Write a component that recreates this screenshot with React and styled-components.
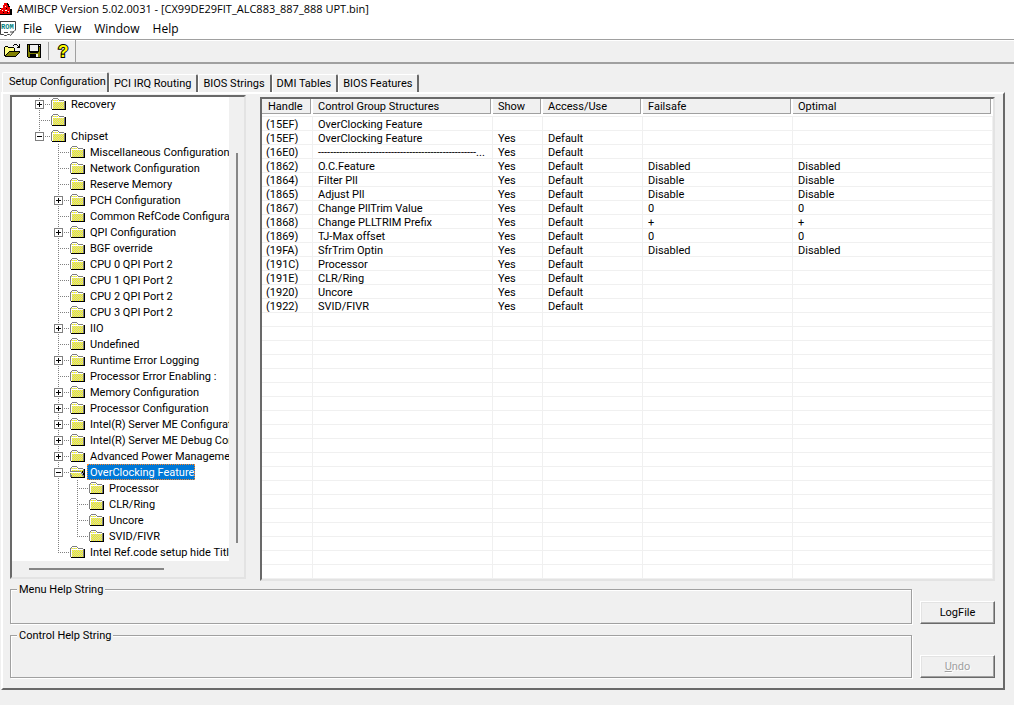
import React, { useState } from 'react';
import styled, { createGlobalStyle } from 'styled-components';

const colorFace = '#f0f0f0';
const colorShadow = '#a0a0a0';
const colorDark = '#696969';
const colorLight = '#e3e3e3';
const colorSelect = '#0078d7';
const fontUi = "'Open Sans', 'Noto Sans', sans-serif";
const fontDialog = "Roboto, 'Liberation Sans', sans-serif";

const GlobalStyle = createGlobalStyle`
  * {
    box-sizing: border-box;
  }
  body {
    margin: 0;
    background: ${colorFace};
  }
  button {
    font: inherit;
    color: inherit;
  }
`;

const Window = styled.div`
  display: flex;
  flex-direction: column;
  min-height: 100vh;
  font-family: ${fontDialog};
  font-size: 11px;
  line-height: 13px;
  color: #000;
`;

const TitleBar = styled.header`
  display: flex;
  align-items: center;
  gap: 4px;
  height: 17px;
  background: #fff;
  font-family: ${fontUi};
`;

const Title = styled.h1`
  margin: 0;
  font-size: 11px;
  font-weight: normal;
  line-height: 15px;
  white-space: nowrap;
`;

const MenuBar = styled.nav`
  display: flex;
  align-items: center;
  height: 22px;
  padding-top: 2px;
  background: #fff;
  font-family: ${fontUi};
  font-size: 12px;
`;

const MenuItem = styled.button`
  border: none;
  padding: 0 6px 0 7px;
  background: none;
  line-height: 18px;
`;

const Toolbar = styled.div`
  display: flex;
  height: 25px;
  border-top: 1px solid ${colorShadow};
  border-bottom: 2px solid ${colorShadow};
  box-shadow: inset 0 1px 0 #fff;
`;

const ToolGroup = styled.div`
  display: flex;
  align-items: center;
  padding: 0 4px;
  border-right: 1px solid ${colorShadow};
`;

const ToolButton = styled.button`
  display: flex;
  flex: none;
  border: none;
  padding: 0;
  width: ${({ $w }) => $w || '22px'};
  background: none;
`;

const ToolDivider = styled.span`
  width: 1px;
  height: 18px;
  margin-right: 8px;
  background: ${colorShadow};
`;

const Workspace = styled.main`
  flex: 1;
  display: flex;
  flex-direction: column;
  padding: 8px 9px 15px 1px;
`;

const TabList = styled.div`
  display: flex;
  align-items: flex-end;
  height: 20px;
  padding-left: 1px;
`;

const Tab = styled.button`
  height: ${({ $active }) => ($active ? '20px' : '18px')};
  padding: ${({ $active }) => ($active ? '0 1px 2px 6px' : '0 5px 0 4px')};
  border: 1px solid #fff;
  border-right: 2px solid ${colorDark};
  border-bottom: none;
  border-radius: 2px 2px 0 0;
  background: ${colorFace};
  white-space: nowrap;
`;

const Panel = styled.section`
  flex: 1;
  display: flex;
  flex-direction: column;
  border: 2px solid;
  border-color: #fff ${colorDark} ${colorDark} #fff;
  padding: 1px 8px 10px 7px;
`;

const Split = styled.div`
  flex: 1;
  display: grid;
  grid-template-columns: 236px 1fr;
  gap: 14px;
`;

const Sunken = styled.div`
  border: 2px solid;
  border-color: ${colorDark} ${colorLight} ${colorLight} ${colorDark};
  box-shadow: inset -1px -1px 0 #fff;
  margin: ${({ $m }) => $m || 0};
  overflow: hidden;
`;

const TreeBox = styled(Sunken)`
  display: grid;
  grid-template-columns: 1fr 15px;
  grid-template-rows: 1fr 16px;
`;

/* scrolled to the end, so the first rows are cut at the top */
const Tree = styled.ul`
  display: flex;
  flex-direction: column;
  justify-content: flex-end;
  min-width: 0;
  height: 464px;
  margin: 0;
  padding: 0 0 1px 18px;
  overflow: hidden;
  list-style: none;
  background: #fff;
`;

const TreeRow = styled.li`
  display: flex;
  flex: none;
  height: 16px;
  white-space: nowrap;
  svg {
    flex: none;
  }
`;

const TreeLabel = styled.span`
  margin-left: 1px;
  padding: 2px 1px 0 3px;
  line-height: 14px;
  color: ${({ $selected }) => ($selected ? '#fff' : '#000')};
  background: ${({ $selected }) => ($selected ? colorSelect : 'none')};
  outline: ${({ $selected }) => ($selected ? '1px dotted #ff8728' : 'none')};
  outline-offset: -1px;
`;

const VerticalBar = styled.div`
  padding: 56px 6px 18px 7px;
  background: ${colorFace};
`;

const HorizontalBar = styled.div`
  grid-column: 1 / 3;
  padding: 7px 80px 7px 17px;
  background: ${colorFace};
`;

const Thumb = styled.div`
  width: 100%;
  height: 100%;
  background: #868686;
`;

const ListBox = styled(Sunken)`
  background: #fff;
`;

const Table = styled.table`
  width: 100%;
  border-collapse: separate;
  border-spacing: 0;
  table-layout: fixed;
`;

const HeadCell = styled.th`
  height: 18px;
  padding: 0 2px 2px 0;
  border-bottom: 1px solid ${colorFace};
  font-weight: normal;
  text-align: left;
`;

const HeadLabel = styled.div`
  height: 15px;
  padding-left: ${({ $first }) => ($first ? '6px' : '5px')};
  border-right: 1px solid ${colorShadow};
  border-bottom: 1px solid ${colorShadow};
  background: ${colorFace};
  line-height: 15px;
`;

const Cell = styled.td`
  height: 14px;
  padding: 2px 4px 0;
  border-right: 1px solid ${colorFace};
  border-bottom: 1px solid ${colorFace};
  line-height: 11px;
  white-space: nowrap;
  overflow: hidden;
  text-overflow: ellipsis;
  & + & {
    padding-left: 5px;
  }
`;

const Footer = styled.div`
  display: grid;
  grid-template-columns: 1fr 75px;
  grid-template-rows: 41px 49px;
  gap: 5px 8px;
  align-items: end;
  margin-top: 2px;
`;

const HelpBox = styled.fieldset`
  height: 100%;
  min-width: 0;
  margin: 0;
  padding: 0 6px;
  border: 1px solid ${colorShadow};
  box-shadow: 1px 1px 0 #fff, inset 1px 1px 0 #fff;
`;

const Legend = styled.legend`
  padding: 0 2px;
  background: ${colorFace};
`;

const PushButton = styled.button`
  height: 23px;
  padding: 0;
  border: 1px solid;
  border-color: #fff ${colorDark} ${colorDark} #fff;
  box-shadow: inset -1px -1px 0 ${colorShadow}, inset 1px 1px 0 ${colorLight};
  background: ${colorFace};
  &:disabled {
    color: ${colorShadow};
    text-shadow: 1px 1px 0 #fff;
  }
`;

const AppIcon = () => (
  <svg width="13" height="14" viewBox="0 0 13 14" shapeRendering="crispEdges">
    <path d="M4 1h3v1h1v2h2v3h1v5H0V8h1V6h2V3h1z" fill="#f00000" />
    <path d="M7 1h1v1h1v2h1v1H8V3H7zM10 7h2v6H0v-1h10zM0 6h1v1H0z" fill="#000" />
    <path d="M5 4h1v1H5zM2 8h1v1H2zM5 8h2v1H5zM8 9h1v1H8z" fill="#fff" />
    <path d="M6 6h1v1H6zM3 10h1v1H3zM7 10h1v1H7z" fill="#000" />
  </svg>
);

const RomIcon = () => (
  <svg width="16" height="16" viewBox="0 0 16 16">
    <path d="M0 1h15v9l-4 4H9l-1-1H6l-2 1H0z" fill="#fff" />
    <path d="M0 .5h15.500v9M.5 0v13.500h3l1 1h2l1-1h2l1 1 4-5M10 11h4M4 11.500h4" fill="none" stroke="#404040" />
    <text x="1" y="8" fontSize="7" fontWeight="bold" fontFamily="Liberation Mono" fill="#008080">ROM</text>
  </svg>
);

const OpenIcon = () => (
  <svg width="16" height="16" viewBox="0 0 16 16" shapeRendering="crispEdges">
    <path d="M1 4h3v1h6v3H5v1H4v1H3v1H2v1H1z" fill="#ffff80" />
    <path d="M5 9h10v1h-1v1h-1v1h-1v1H2v-1h1v-1h1v-1h1z" fill="#808000" />
    <path d="M1 3h3v1H1zM4 4h6v1H4zM0 4h1v9H0zM10 5h1v3h-1zM5 8h11v1H5zM4 9h1v1H4zM3 10h1v1H3zM2 11h1v1H2zM1 12h1v1H1zM1 13h11v1H1zM12 12h1v1h-1zM13 11h1v1h-1zM14 10h1v1h-1zM15 9h1v1h-1zM9 2h1v1H9zM10 1h3v1h-3zM13 2h1v1h-1zM14 3h1v1h-1zM15 1h1v4h-1zM13 4h3v1h-3z" fill="#000" />
  </svg>
);

const SaveIcon = () => (
  <svg width="16" height="16" viewBox="0 0 16 16" shapeRendering="crispEdges">
    <path d="M1 1h14v14H2v-1H1z" fill="#000" />
    <path d="M2 2h1v7h1v1h8V9h1V4h1v10H2z" fill="#808000" />
    <path d="M4 2h8v6H4zM13 2h1v1h-1zM10 11h2v3h-2z" fill="#f0f0f0" />
    <path d="M4 11h6v3H4z" fill="#000" />
  </svg>
);

const HelpIcon = () => (
  <svg width="14" height="16" viewBox="0 0 14 16" overflow="visible">
    <text
      x="1" y="14" fontSize="17" fontWeight="bold" fontFamily="Liberation Sans"
      fill="#ffff00" stroke="#000" strokeWidth="2" paintOrder="stroke"
    >
      ?
    </text>
  </svg>
);

const Folder = ({ open }) => (
  <svg width="16" height="16" viewBox="0 0 16 16" shapeRendering="crispEdges">
    <defs>
      <pattern id="dither" width="2" height="2" patternUnits="userSpaceOnUse">
        <path d="M0 0h2v2H0z" fill="#c8c8c8" />
        <path d="M0 0h1v1H0zM1 1h1v1H1z" fill="#ffff00" />
      </pattern>
    </defs>
    <path d="M2 3h5v2h6v8H1V4h1z" fill="url(#dither)" />
    <path d="M2 2h5v1H2zM1 3h1v1H1zM7 3h1v1H7zM8 4h5v1H8zM0 4h1v9H0zM13 5h1v8h-1zM1 13h12v1H1z" fill="#808080" />
    <path d="M14 5h1v9H1v-1h13z" fill="#000" />
    <path d="M2 3h5v1H2zM1 5h12v1H1zM1 5h1v8H1z" fill="#fff" />
    {open && (
      <>
        <path d="M0 8h11l3 5H3z" fill="url(#dither)" />
        <path d="M0 8h11v1H0z" fill="#fff" />
        <path d="M-1 7h12v1h1v2h1v2h1v1h-1v-1h-1v-2h-1V8H0v1h1v2h1v2H1v-2H0V9h-1z" fill="#808080" />
        <path d="M12 7h1v2h1v2h1v3h-1v-3h-1V9h-1z" fill="#000" />
      </>
    )}
  </svg>
);

/* one column of the dotted connector lines */
const Guide = ({ line, joint, last, box }) => (
  <svg width={joint ? 21 : 19} height="16" shapeRendering="crispEdges">
    {line && (
      <path d={last ? 'M9.500 0v8' : 'M9.500 0v16'} stroke="#808080" strokeDasharray="1 1" />
    )}
    {joint && <path d="M9 8.500h12" stroke="#808080" strokeDasharray="1 1" />}
    {box && (
      <>
        <rect x="5.500" y="4.500" width="8" height="8" fill="#fff" stroke="#808080" />
        <path d={box === '+' ? 'M7 8.500h5M9.500 6v5' : 'M7 8.500h5'} stroke="#000" />
      </>
    )}
  </svg>
);

const nodes = [
  { level: 0, label: 'Recovery', box: '+' },
  { level: 0, label: '' },
  { level: 0, label: 'Chipset', box: '-', last: true },
  { level: 1, label: 'Miscellaneous Configuration' },
  { level: 1, label: 'Network Configuration' },
  { level: 1, label: 'Reserve Memory' },
  { level: 1, label: 'PCH Configuration', box: '+' },
  { level: 1, label: 'Common RefCode Configuration' },
  { level: 1, label: 'QPI Configuration', box: '+' },
  { level: 1, label: 'BGF override' },
  { level: 1, label: 'CPU 0 QPI Port 2' },
  { level: 1, label: 'CPU 1 QPI Port 2' },
  { level: 1, label: 'CPU 2 QPI Port 2' },
  { level: 1, label: 'CPU 3 QPI Port 2' },
  { level: 1, label: 'IIO', box: '+' },
  { level: 1, label: 'Undefined' },
  { level: 1, label: 'Runtime Error Logging', box: '+' },
  { level: 1, label: 'Processor Error Enabling :' },
  { level: 1, label: 'Memory Configuration', box: '+' },
  { level: 1, label: 'Processor Configuration', box: '+' },
  { level: 1, label: 'Intel(R) Server ME Configuration', box: '+' },
  { level: 1, label: 'Intel(R) Server ME Debug Configuration', box: '+' },
  { level: 1, label: 'Advanced Power Management', box: '+' },
  { level: 1, label: 'OverClocking Feature', box: '-', open: true },
  { level: 2, label: 'Processor' },
  { level: 2, label: 'CLR/Ring' },
  { level: 2, label: 'Uncore' },
  { level: 2, label: 'SVID/FIVR', last: true },
  { level: 1, label: 'Intel Ref.code setup hide Title', last: true }
];

const columns = ['Handle', 'Control Group Structures', 'Show', 'Access/Use', 'Failsafe', 'Optimal'];

const rows = [
  ['(15EF)', 'OverClocking Feature', '', '', '', ''],
  ['(15EF)', 'OverClocking Feature', 'Yes', 'Default', '', ''],
  ['(16E0)', `${'-'.repeat(52)}...`, 'Yes', 'Default', '', ''],
  ['(1862)', 'O.C.Feature', 'Yes', 'Default', 'Disabled', 'Disabled'],
  ['(1864)', 'Filter Pll', 'Yes', 'Default', 'Disable', 'Disable'],
  ['(1865)', 'Adjust Pll', 'Yes', 'Default', 'Disable', 'Disable'],
  ['(1867)', 'Change PllTrim Value', 'Yes', 'Default', '0', '0'],
  ['(1868)', 'Change PLLTRIM Prefix', 'Yes', 'Default', '+', '+'],
  ['(1869)', 'TJ-Max offset', 'Yes', 'Default', '0', '0'],
  ['(19FA)', 'SfrTrim Optin', 'Yes', 'Default', 'Disabled', 'Disabled'],
  ['(191C)', 'Processor', 'Yes', 'Default', '', ''],
  ['(191E)', 'CLR/Ring', 'Yes', 'Default', '', ''],
  ['(1920)', 'Uncore', 'Yes', 'Default', '', ''],
  ['(1922)', 'SVID/FIVR', 'Yes', 'Default', '', '']
];

const emptyRows = Array.from({ length: 19 }, () => columns.map(() => ''));

const tabs = ['Setup Configuration', 'PCI IRQ Routing', 'BIOS Strings', 'DMI Tables', 'BIOS Features'];

const App = () => {
  const [tab, setTab] = useState(tabs[0]);
  const [selected, setSelected] = useState('OverClocking Feature');

  return (
    <Window>
      <GlobalStyle />
      <TitleBar>
        <AppIcon />
        <Title>AMIBCP Version 5.02.0031 - [CX99DE29FIT_ALC883_887_888 UPT.bin]</Title>
      </TitleBar>
      <MenuBar>
        <RomIcon />
        {['File', 'View', 'Window', 'Help'].map(item => (
          <MenuItem key={item}>{item}</MenuItem>
        ))}
      </MenuBar>
      <Toolbar>
        <ToolGroup>
          <ToolButton aria-label="Open"><OpenIcon /></ToolButton>
          <ToolButton aria-label="Save"><SaveIcon /></ToolButton>
          <ToolDivider />
          <ToolButton aria-label="Help" $w="14px"><HelpIcon /></ToolButton>
        </ToolGroup>
      </Toolbar>
      <Workspace>
        <TabList role="tablist">
          {tabs.map(name => (
            <Tab
              key={name}
              role="tab"
              aria-selected={name === tab}
              $active={name === tab}
              onClick={() => setTab(name)}
            >
              {name}
            </Tab>
          ))}
        </TabList>
        <Panel>
          <Split>
            <TreeBox $m="0 0 2px">
              <Tree role="tree">
                {nodes.map(({ level, label, box, last, open }, i) => (
                  <TreeRow key={i} role="treeitem" onClick={() => setSelected(label)}>
                    {level > 0 && <Guide />}
                    {level > 1 && <Guide line />}
                    <Guide line joint last={last} box={box} />
                    <Folder open={open} />
                    <TreeLabel $selected={label === selected}>{label}</TreeLabel>
                  </TreeRow>
                ))}
              </Tree>
              <VerticalBar><Thumb /></VerticalBar>
              <HorizontalBar><Thumb /></HorizontalBar>
            </TreeBox>
            <ListBox $m="2px 0 0">
              <Table>
                <colgroup>
                  <col width="51" />
                  <col width="180" />
                  <col width="50" />
                  <col width="100" />
                  <col width="150" />
                  <col />
                </colgroup>
                <thead>
                  <tr>
                    {columns.map((name, i) => (
                      <HeadCell key={name}>
                        <HeadLabel $first={i === 0}>{name}</HeadLabel>
                      </HeadCell>
                    ))}
                  </tr>
                </thead>
                <tbody>
                  {[...rows, ...emptyRows].map((row, i) => (
                    <tr key={i}>
                      {row.map((value, j) => (
                        <Cell key={j}>{value}</Cell>
                      ))}
                    </tr>
                  ))}
                </tbody>
              </Table>
            </ListBox>
          </Split>
          <Footer>
            <HelpBox>
              <Legend>Menu Help String</Legend>
            </HelpBox>
            <PushButton>LogFile</PushButton>
            <HelpBox>
              <Legend>Control Help String</Legend>
            </HelpBox>
            <PushButton disabled><u>U</u>ndo</PushButton>
          </Footer>
        </Panel>
      </Workspace>
    </Window>
  );
};

export default App;
